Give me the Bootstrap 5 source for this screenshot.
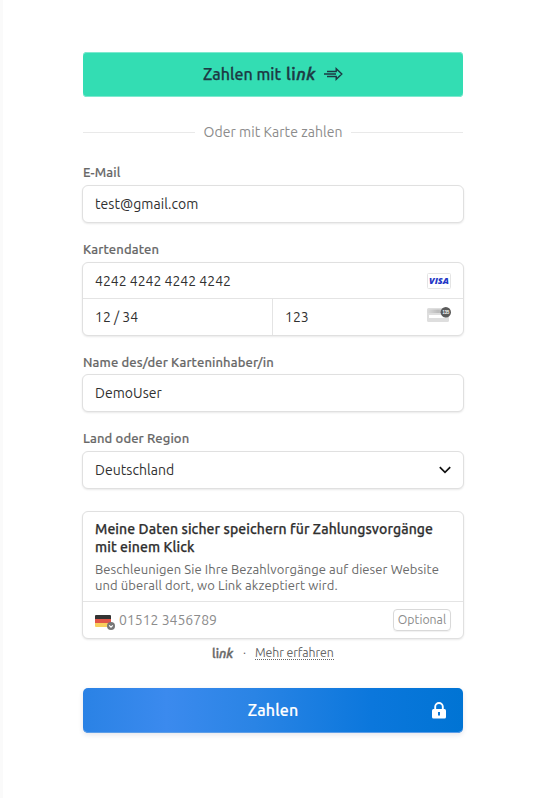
<!DOCTYPE html>
<html lang="de">
<head>
<meta charset="utf-8">
<meta name="viewport" content="width=device-width, initial-scale=1">
<title>Zahlen</title>
<link href="https://cdn.jsdelivr.net/npm/bootstrap@5.3.0/dist/css/bootstrap.min.css" rel="stylesheet">
<style>
body{font-family:Ubuntu,"Noto Sans","Open Sans",sans-serif;font-size:14px;color:#303030;background:#fff;height:798px;overflow:hidden;border-left:3px solid #fafafa}
.checkout{width:382px;margin-left:79px;padding-top:52px}
.link-pay{height:45px;width:380px;margin-left:1px;padding:0 120px 2px;background:#33ddb3;color:#1d3944;border:0;border-radius:4px;font-size:16px;font-weight:500;-webkit-text-stroke:.25px;box-shadow:inset 0 1px #7ee9cf,inset 0 -1px #7ee9cf}
.link-pay .caption-text{width:83px;text-align:left}
.pay{height:45px;width:380px;margin:25px 0 0 1px;padding:0 0 2px;border:0;border-radius:5px;color:#fff;font-size:16px;font-weight:500;-webkit-text-stroke:.2px;letter-spacing:.15px;background:linear-gradient(90deg,#2a82e5 0%,#3b8aee 22%,#2a84e5 45%,#0b77dc 76%,#0074d4 100%);box-shadow:inset 0 -1px #5d9ee8,0 2px 5px rgba(50,50,93,.12)}
.lock{position:absolute;right:17px;top:14px}
.wordmark{font-weight:500;-webkit-text-stroke:.5px;font-size:17px;letter-spacing:.5px;line-height:20px}
.or{height:20px;margin:25px 1px 0;color:#8c8c8c;letter-spacing:.05px}
.or .rule{height:1px;width:112px;background:#e9e9e9}
.lbl{height:16px;line-height:16px;font-size:13px;font-weight:500;-webkit-text-stroke:.15px;letter-spacing:.12px;color:#686868;margin:18px 0 5px 1px}
.lbl.first{margin-top:22px}
.lbl.tight{margin-bottom:4px}
.box{border:1px solid #e0e0e0;border-radius:6px;box-shadow:0 1px 2px rgba(0,0,0,.09);background:#fff}
.field{height:38px;padding:0 12px;letter-spacing:.05px}
.cell{height:36px;padding:0 12px}
.cell.number{height:35px;padding-top:1px}
.cell.expiry{width:189px}
.cell.phone{height:37px}
.line-t{border-top:1px solid #e4e4e4}
.line-l{border-left:1px solid #e4e4e4}
.save{margin-top:22px}
.save-text{height:89px;padding:8px 12px 0}
.save-h{font-weight:500;-webkit-text-stroke:.25px;letter-spacing:.105px;line-height:18px}
.save-p{font-size:13px;line-height:16px;color:#6a6a6a;margin-top:5px;letter-spacing:.08px}
.muted{color:#8c8c8c}
.opt{border:1px solid #d9d9d9;border-radius:4px;height:22px;width:58px;font-size:12.3px;color:#8c8c8c;box-shadow:0 1px 1px rgba(0,0,0,.06)}
.foot{height:20px;font-size:12.3px;letter-spacing:-.1px;color:#666;margin-top:4px;padding-left:130px}
.foot .wordmark{font-size:13px;letter-spacing:0;width:24px;-webkit-text-stroke:.4px}
.foot .dot{margin-left:7px;width:12px}
.more{color:#666;border-bottom:1px dotted #666;line-height:13px}
</style>
</head>
<body>
<main class="checkout d-flex flex-column text-nowrap">
  <button class="link-pay d-flex align-items-center"><span class="caption-text">Zahlen mit</span><span class="wordmark">li<i>nk</i></span>
    <svg class="ms-auto" width="19" height="14" viewBox="0 0 19 14" fill="none" stroke="#1d3944" stroke-width="1.4"><path d="M3 4.500h9.200V1.700L17.800 7l-5.600 5.300V9.500H3M0 7h12"/></svg></button>
  <div class="or d-flex align-items-center justify-content-between"><span class="rule"></span><span>Oder mit Karte zahlen</span><span class="rule"></span></div>

  <div class="lbl first">E-Mail</div>
  <div class="box field d-flex align-items-center">test@gmail.com</div>

  <div class="lbl">Kartendaten</div>
  <div class="box">
    <div class="cell number d-flex align-items-center justify-content-between"><span>4242 4242 4242 4242</span>
      <svg width="24" height="16" viewBox="0 0 24 16"><rect x=".5" y=".5" width="23" height="15" rx="1" fill="#fff" stroke="#e4e4e4"/><text x="2" y="11.200" textLength="20" lengthAdjust="spacingAndGlyphs" font-family="Open Sans,sans-serif" font-size="9" font-weight="800" font-style="italic" fill="#2337c6">VISA</text></svg></div>
    <div class="d-flex line-t">
      <div class="cell expiry d-flex align-items-center">12 / 34</div>
      <div class="cell line-l flex-fill d-flex align-items-center justify-content-between"><span>123</span>
        <svg width="24" height="20" viewBox="0 0 24 20"><defs><linearGradient id="cardgrad"><stop stop-color="#ddd"/><stop offset=".5" stop-color="#bbb"/><stop offset="1" stop-color="#d5d5d5"/></linearGradient></defs><rect y="1" width="22" height="14" rx="1.500" fill="#dedede"/><path d="M0 2.500h22v3.500H0z" fill="url(#cardgrad)"/><path d="M2 8h16v3H2z" fill="#fff"/><circle cx="18.800" cy="5.200" r="5.200" fill="#5b5b5b"/><text x="15.400" y="7.300" textLength="6.800" lengthAdjust="spacingAndGlyphs" font-family="Liberation Sans,sans-serif" font-size="5.500" font-weight="700" fill="#fff">135</text></svg></div>
    </div>
  </div>

  <div class="lbl tight">Name des/der Karteninhaber/in</div>
  <div class="box field d-flex align-items-center">DemoUser</div>

  <div class="lbl">Land oder Region</div>
  <div class="box field d-flex align-items-center justify-content-between"><span>Deutschland</span>
    <svg width="12" height="8" viewBox="0 0 12 8" fill="none" stroke="#111" stroke-width="1.700"><path d="M.8 1.200 6 6.400l5.200-5.200"/></svg></div>

  <div class="box save">
    <div class="save-text">
      <div class="save-h">Meine Daten sicher speichern für Zahlungsvorgänge<br>mit einem Klick</div>
      <div class="save-p">Beschleunigen Sie Ihre Bezahlvorgänge auf dieser Website<br>und überall dort, wo Link akzeptiert wird.</div>
    </div>
    <div class="cell phone line-t d-flex align-items-center">
      <svg width="20" height="16" viewBox="0 0 20 16" class="mt-1"><path d="M0 2a1 1 0 0 1 1-1h14a1 1 0 0 1 1 1v3H0z" fill="#333"/><path d="M0 5h16v4H0z" fill="#e25547"/><path d="M0 9h16v3a1 1 0 0 1-1 1H1a1 1 0 0 1-1-1z" fill="#f8cf5d"/><circle cx="16" cy="12" r="4" fill="#777"/><path d="m14.200 11.300 1.800 1.800 1.800-1.800" stroke="#fff" stroke-width="1.200" fill="none"/></svg>
      <span class="ms-1 muted">01512 3456789</span>
      <span class="opt ms-auto d-flex align-items-center justify-content-center">Optional</span>
    </div>
  </div>
  <div class="foot d-flex align-items-center"><span class="wordmark">li<i>nk</i></span><span class="dot">·</span><a class="more text-decoration-none" href="#">Mehr erfahren</a></div>
  <button class="pay position-relative">Zahlen
    <svg class="lock" width="14" height="17" viewBox="0 0 14 17"><path d="M3.200 8V4.800a3.800 3.800 0 0 1 7.600 0V8" fill="none" stroke="#fff" stroke-width="1.900"/><rect y="7" width="14" height="9.500" rx="1.500" fill="#fff"/><path d="M6 10h2v3.500H6z" fill="#0875d6"/></svg></button>
</main>
<script src="https://cdn.jsdelivr.net/npm/bootstrap@5.3.0/dist/js/bootstrap.bundle.min.js"></script>
</body>
</html>
